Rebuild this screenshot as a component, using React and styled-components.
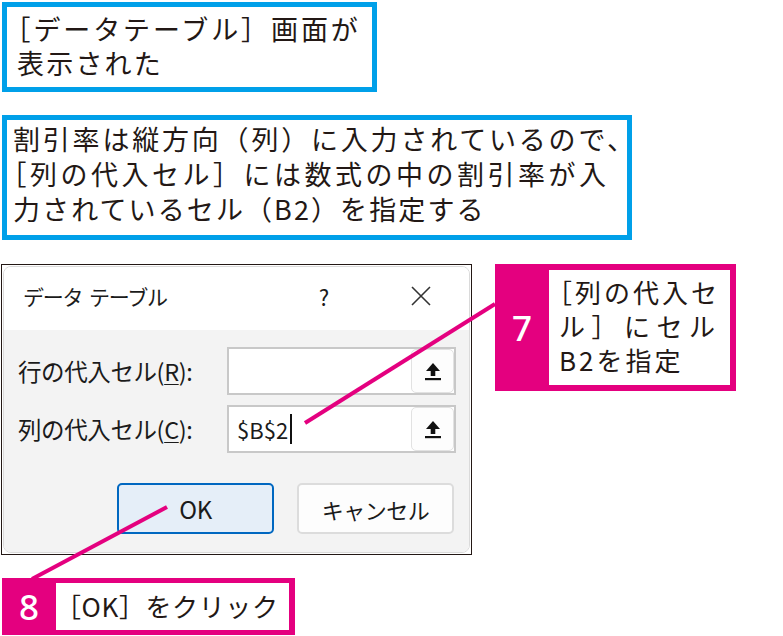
import React from 'react'
import styled, { createGlobalStyle } from 'styled-components'

const GlobalStyle = createGlobalStyle`
  html, body {
    margin: 0;
    padding: 0;
    background: #fff;
  }
  body {
    font-family: "Noto Sans CJK JP", "Noto Sans", sans-serif;
    color: #231815;
  }
`

const PINK = '#e4007f'
const BLUE = '#00a0e9'

const Page = styled.div`
  position: relative;
  width: 783px;
  height: 636px;
  box-sizing: border-box;
  padding: 2px 0 0 1px;
  display: flex;
  flex-direction: column;
  align-items: flex-start;
  overflow: hidden;
`

const Note = styled.div`
  box-sizing: border-box;
  width: ${p => p.$w}px;
  height: ${p => p.$h}px;
  margin-left: 1px;
  margin-bottom: ${p => p.$mb}px;
  border: 5px solid ${BLUE};
  padding: ${p => p.$pad};
  font-size: 27px;
  line-height: ${p => p.$lh}px;
  white-space: nowrap;
`

// one printed line; letter-spacing varies because the print is justified
const Line = styled.span`
  display: block;
  letter-spacing: ${p => p.$ls}px;
`

// line-start opening bracket is set half-width, as in the print layout
const Open = styled.span`
  margin-left: -0.5em;
`

const DialogRow = styled.div`
  display: flex;
  align-items: flex-start;
  gap: 23px;
`

const Frame = styled.div`
  box-sizing: border-box;
  width: 471px;
  height: 291px;
  border: 1px solid #231815;
  background: #fff;
  padding: 1px;
`

const Window = styled.div`
  box-sizing: border-box;
  height: 100%;
  display: flex;
  flex-direction: column;
  border: 1px solid #dadada;
  border-radius: 8px;
  overflow: hidden;
  font-family: "Noto Sans CJK JP", sans-serif;
  color: #1b1b1b;
`

const TitleBar = styled.div`
  height: 63px;
  flex-shrink: 0;
  background: #fff;
  display: flex;
  align-items: center;
  padding: 0 0 6px 19px;
  box-sizing: border-box;
`

const Title = styled.span`
  font-size: 21px;
  letter-spacing: -1.2px;
  word-spacing: 3px;
`

const Help = styled.span`
  margin-left: auto;
  font-size: 22px;
  width: 20px;
  text-align: center;
`

const Close = styled.span`
  display: flex;
  align-items: center;
  justify-content: center;
  width: 24px;
  margin: 0 36px 0 75px;
`

const Body = styled.div`
  flex: 1;
  background: #f3f3f3;
  padding: 17px 13px 0 14px;
`

const Field = styled.div`
  display: flex;
  align-items: center;
  height: 48px;
  margin-bottom: 10px;
`

const Label = styled.span`
  width: 210px;
  font-size: 23.5px;
  letter-spacing: -0.4px;
  u { text-decoration-thickness: 1px; text-underline-offset: 3px; }
`

const Input = styled.div`
  box-sizing: border-box;
  width: 230px;
  height: 48px;
  border: 2px solid #c8c8c8;
  background: #fff;
  display: flex;
  align-items: center;
  padding-left: 8px;
  font-size: 22px;
`

const Caret = styled.span`
  display: inline-block;
  width: 2px;
  height: 30px;
  margin-left: 2px;
  background: #111;
`

const RefButton = styled.span`
  box-sizing: border-box;
  margin-left: auto;
  width: 43px;
  height: 44px;
  border: 1px solid #e2e2e2;
  border-radius: 5px;
  background: #fdfdfd;
  display: flex;
  align-items: center;
  justify-content: center;
`

const Buttons = styled.div`
  display: flex;
  justify-content: flex-end;
  gap: 23px;
  margin-top: 30px;
  padding-right: 2px;
`

const Button = styled.div`
  box-sizing: border-box;
  width: 157px;
  height: 51px;
  border-radius: 5px;
  border: ${p => (p.$primary ? '2px solid #0067c0' : '2px solid #dcdcdc')};
  background: ${p => (p.$primary ? '#e5eef8' : '#fdfdfd')};
  display: flex;
  align-items: center;
  justify-content: center;
  font-size: ${p => (p.$primary ? 24 : 22)}px;
  letter-spacing: -0.5px;
`

const Callout = styled.div`
  box-sizing: border-box;
  width: ${p => p.$w}px;
  height: ${p => p.$h}px;
  margin-top: ${p => p.$mt || 0}px;
  margin-left: ${p => p.$ml || 0}px;
  background: ${PINK};
  display: flex;
  padding: ${p => p.$pad};
`

const Step = styled.div`
  width: 54px;
  flex-shrink: 0;
  display: flex;
  align-items: center;
  justify-content: center;
  color: #fff;
  font-family: "Noto Sans", sans-serif;
  font-weight: 500;
  font-size: 35px;
`

const StepText = styled.div`
  flex: 1;
  min-width: 0;
  background: #fff;
  padding: ${p => p.$pad};
  font-size: 26px;
  line-height: ${p => p.$lh}px;
  white-space: nowrap;
`

const Leaders = styled.svg`
  position: absolute;
  left: 0;
  top: 0;
  pointer-events: none;
`

const UploadIcon = () => (
  <svg width="18" height="19" viewBox="0 0 18 19">
    <path d="M9 1 L16 9 H11.3 V14 H6.7 V9 H2 Z" fill="#111" />
    <rect x="1" y="16" width="16" height="2.2" fill="#111" />
  </svg>
)

const CloseIcon = () => (
  <svg width="22" height="22" viewBox="0 0 22 22">
    <path d="M2 2 L20 20 M20 2 L2 20" stroke="#333" strokeWidth="1.6" />
  </svg>
)

export default function App() {
  return (
    <>
      <GlobalStyle />
      <Page>
        <Note $w={375} $h={90} $mb={23} $pad="5px 0 0 10px" $lh={34}>
          <Line $ls={2.9}><Open>［</Open>データテーブル］画面が</Line>
          <Line $ls={2.2}>表示された</Line>
        </Note>
        <Note $w={630} $h={125} $mb={24} $pad="1px 0 0 6px" $lh={35}>
          <Line $ls={2.8}>割引率は縦方向（列）に入力されているので、</Line>
          <Line $ls={3.5}><Open>［</Open>列の代入セル］には数式の中の割引率が入</Line>
          <Line $ls={2.1}>力されているセル（B2）を指定する</Line>
        </Note>
        <DialogRow>
          <Frame>
            <Window>
              <TitleBar>
                <Title>データ テーブル</Title>
                <Help>?</Help>
                <Close><CloseIcon /></Close>
              </TitleBar>
              <Body>
                <Field>
                  <Label>行の代入セル(<u>R</u>):</Label>
                  <Input>
                    <RefButton><UploadIcon /></RefButton>
                  </Input>
                </Field>
                <Field>
                  <Label>列の代入セル(<u>C</u>):</Label>
                  <Input>
                    $B$2<Caret />
                    <RefButton><UploadIcon /></RefButton>
                  </Input>
                </Field>
                <Buttons>
                  <Button $primary>OK</Button>
                  <Button>キャンセル</Button>
                </Buttons>
              </Body>
            </Window>
          </Frame>
          <Callout $w={241} $h={127} $pad="6px 6px 6px 0">
            <Step>7</Step>
            <StepText $pad="5px 0 0 10px" $lh={34}>
              <Line $ls={3}><Open>［</Open>列の代入セ</Line>
              <Line $ls={6.5}>ル］にセル</Line>
              <Line $ls={3}>B2を指定</Line>
            </StepText>
          </Callout>
        </DialogRow>
        <Callout $w={293} $h={57} $mt={23} $ml={1} $pad="5px 6px 5px 0">
          <Step>8</Step>
          <StepText $pad="4px 0 0 12px" $lh={38}>
            <Line $ls={0.6}><Open>［</Open>OK］をクリック</Line>
          </StepText>
        </Callout>
        <Leaders width="783" height="636" viewBox="0 0 783 636">
          <line x1="495" y1="304" x2="305" y2="423" stroke={PINK} strokeWidth="4" />
          <line x1="167" y1="507" x2="32" y2="579" stroke={PINK} strokeWidth="4" />
        </Leaders>
      </Page>
    </>
  )
}
